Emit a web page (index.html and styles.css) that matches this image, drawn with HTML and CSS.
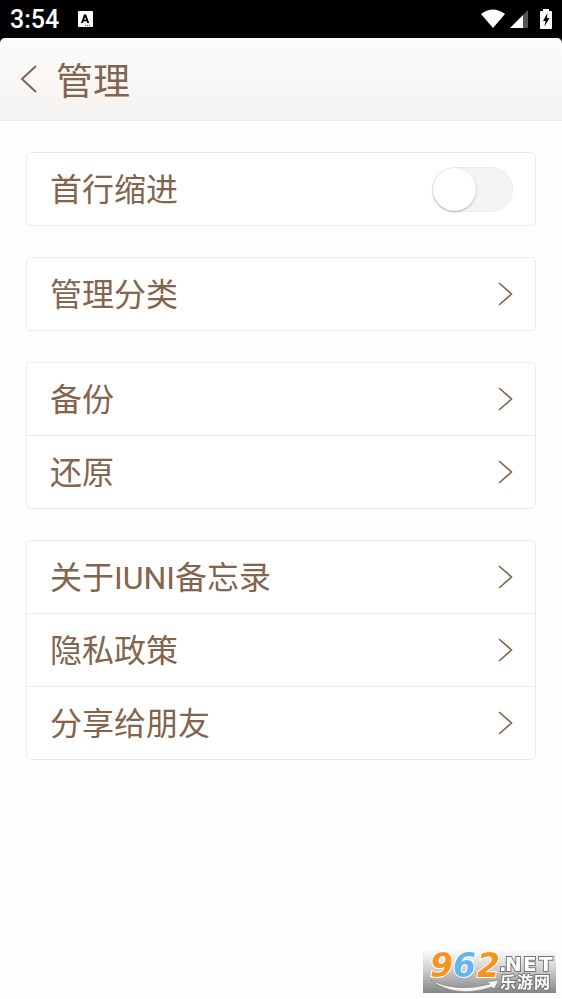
FILE: index.html
```html
<!DOCTYPE html>
<html lang="zh-CN">
<head>
<meta charset="utf-8">
<meta name="viewport" content="width=device-width, initial-scale=1">
<title>管理</title>
<link rel="stylesheet" href="styles.css">
</head>
<body>
<svg class="defs" aria-hidden="true">
  <symbol id="chevron" viewBox="0 0 16 26"><path d="M2 2 14.500 13 2 24" stroke-width="1.600"/></symbol>
</svg>
<div class="status">
  <span class="time">3:54</span>
  <svg class="badge" viewBox="0 0 16 17" aria-hidden="true">
    <rect x="1" y="0" width="15" height="16" rx="1" fill="#fff"/>
    <path d="M4 12 7 3.500h2.200l3 8.500h-2l-.6-1.700H6.600L6 12zM7.200 8.800H9L8.100 6z" fill="#000"/>
    <path d="M8 14.500h6" stroke="#555" stroke-dasharray="1 1"/>
  </svg>
  <span class="signals">
    <svg class="wifi" viewBox="0 0 26 20" aria-hidden="true"><path d="M1 5Q13-4 25 5L13 19z" fill="#fff"/></svg>
    <svg class="cell" viewBox="0 0 18 18" aria-hidden="true"><path d="M0 18 13 5V18z" fill="#fff"/><path d="M13 5 18 0V18H13z" fill="#555"/></svg>
    <svg class="battery" viewBox="0 0 12 20" aria-hidden="true"><path d="M3 2V0h6v2h2q1 0 1 1v16q0 1-1 1H1q-1 0-1-1V3q0-1 1-1z" fill="#fff"/><path d="M7.500 4 3 12h2.500L4.500 17.500 9.500 9H7z" fill="#000"/></svg>
  </span>
</div>
<header class="bar">
  <button class="back" type="button" aria-label="返回">
    <svg viewBox="0 0 18 30" aria-hidden="true"><path d="M16 2 2 15 16 28"/></svg>
  </button>
  <h1>管理</h1>
</header>
<main>
  <section class="card">
    <label class="row" for="indent"><span class="label">首行缩进</span><input id="indent" class="switch" type="checkbox" role="switch"></label>
  </section>
  <section class="card">
    <a class="row" href="#categories"><span class="label">管理分类</span><svg class="go" aria-hidden="true"><use href="#chevron"/></svg></a>
  </section>
  <section class="card">
    <a class="row" href="#backup"><span class="label">备份</span><svg class="go" aria-hidden="true"><use href="#chevron"/></svg></a>
    <a class="row" href="#restore"><span class="label">还原</span><svg class="go" aria-hidden="true"><use href="#chevron"/></svg></a>
  </section>
  <section class="card">
    <a class="row" href="#about"><span class="label">关于IUNI备忘录</span><svg class="go" aria-hidden="true"><use href="#chevron"/></svg></a>
    <a class="row" href="#privacy"><span class="label">隐私政策</span><svg class="go" aria-hidden="true"><use href="#chevron"/></svg></a>
    <a class="row" href="#share"><span class="label">分享给朋友</span><svg class="go" aria-hidden="true"><use href="#chevron"/></svg></a>
  </section>
</main>
<svg class="mark" viewBox="0 0 133 43" role="img" aria-label="962.NET 乐游网">
  <defs>
    <linearGradient id="shade" x1="0" y1="0" x2="0" y2="1"><stop offset="0" stop-color="#fcfcfc"/><stop offset=".45" stop-color="#cfcfcf"/><stop offset="1" stop-color="#858585"/></linearGradient>
  </defs>
  <rect width="133" height="43" fill="url(#shade)"/>
  <path d="M7 30Q34 43 67 34L63 32 76 30 71 39 69 37Q33 49 7 30z" fill="#f4f4f4" stroke="#8c8c8c" stroke-width=".8"/>
  <g class="digits"><text x="7" y="27" fill="#f7941e">9</text><text x="30" y="27" fill="#64b5ea">6</text><text x="54" y="27" fill="#f7941e">2</text></g>
  <text class="net" x="76" y="21">.</text><text class="net" x="82" y="21">N</text><text class="net" x="100" y="21">E</text><text class="net" x="116" y="21">T</text>
  <text class="site" x="77" y="38">乐</text><text class="site" x="94" y="38">游</text><text class="site" x="111" y="38">网</text>
</svg>
</body>
</html>
```
FILE: styles.css
```css
* { box-sizing: border-box; }

body {
  margin: 0;
  min-height: 100vh;
  background: #fefefe;
  color: #83644c;
  font-family: Roboto, "Noto Sans CJK SC", sans-serif;
}

.defs { position: absolute; width: 0; height: 0; }

.status {
  display: flex;
  align-items: center;
  height: 46px;
  margin-bottom: -8px;
  padding: 0 10px 8px;
  background: #000;
  color: #fff;
}

.time { padding-top: 2px; font-size: 25px; font-weight: 500; line-height: 36px; }
.badge { width: 16px; height: 17px; margin-left: 18px; }
.signals { display: flex; align-items: center; margin-left: auto; }
.wifi { width: 26px; height: 20px; margin-right: 4px; }
.cell { width: 18px; height: 18px; margin-right: 12px; }
.battery { width: 12px; height: 20px; }

.bar {
  position: relative;
  display: flex;
  align-items: center;
  height: 83px;
  padding: 0 20px;
  border-bottom: 1px solid #ececea;
  border-radius: 5px 5px 0 0;
  background: linear-gradient(#fcfcfc, #f5f3f1);
}

.back {
  display: flex;
  width: 18px;
  margin: 0 18px 0 0;
  padding: 0;
  border: 0;
  background: none;
  color: inherit;
}

.back svg { width: 18px; height: 30px; fill: none; stroke: currentColor; stroke-width: 2; }

h1 { margin: 0; padding-top: 8px; font-size: 37px; font-weight: 400; line-height: 48px; }

main { display: flex; flex-direction: column; gap: 31px; padding: 31px 26px; }

.card { border: 1px solid #ebebeb; border-radius: 5px; background: #fff; }

.row {
  display: flex;
  align-items: center;
  justify-content: space-between;
  height: 72px;
  padding: 0 22px 0 23px;
  color: inherit;
  font-size: 32px;
  line-height: 48px;
  text-decoration: none;
}

.label { padding-top: 2px; }

.row + .row { height: 73px; border-top: 1px solid #ebebeb; }

.go { width: 16px; height: 26px; fill: none; stroke: currentColor; }

.switch {
  appearance: none;
  display: flex;
  width: 81px;
  height: 45px;
  margin: 0;
  border: 1px solid #ececec;
  border-radius: 23px;
  background: #f4f4f4;
}

.switch::before {
  content: "";
  width: 43px;
  height: 43px;
  border-radius: 50%;
  background: #fff;
  box-shadow: 0 1px 2px #aaa;
}

.switch:checked { justify-content: flex-end; background: #cdb8a6; }

.mark { position: fixed; right: 6px; bottom: 6px; width: 133px; height: 43px; overflow: visible; }
.digits { font: italic 700 33px "DejaVu Sans", sans-serif; stroke: #fff; stroke-width: 2px; paint-order: stroke; }
.net { font: 700 20px "DejaVu Sans", sans-serif; fill: #fff; stroke: #777; stroke-width: 2px; paint-order: stroke; }
.site { font: 700 16px "Noto Sans CJK SC", sans-serif; fill: #fff; stroke: #777; stroke-width: 2px; paint-order: stroke; }
```
